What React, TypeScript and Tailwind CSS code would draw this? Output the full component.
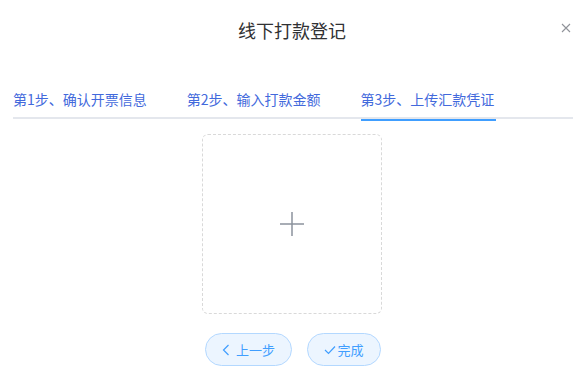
import React from "react";

const font = { fontFamily: '"Noto Sans CJK SC", "Noto Sans", sans-serif' };

export default function App() {
  const tabs = ["第1步、确认开票信息", "第2步、输入打款金额", "第3步、上传汇款凭证"];
  return (
    <div className="w-[584px] h-[379px] bg-white overflow-hidden" style={font}>
      <div className="relative h-[60px] flex items-center justify-center">
        <span className="text-[18px] leading-[24px] text-[#303133]">线下打款登记</span>
        <button className="absolute right-[11px] top-[21px] w-[14px] h-[14px] flex items-center justify-center text-[#909399]">
          <svg width="10" height="10" viewBox="0 0 10 10" fill="none" stroke="currentColor" strokeWidth="1.1">
            <path d="M1 1L9 9M9 1L1 9" />
          </svg>
        </button>
      </div>
      <div className="pl-[13px] pr-[11px] pt-[19px]">
        <div className="flex h-[40px] border-b-2 border-[#e4e7ed]">
          {tabs.map((t, i) => (
            <div
              key={t}
              className={`relative flex items-center h-[40px] text-[14px] text-[#4269dc] ${i === 0 ? "pr-[20px]" : "px-[20px]"}`}
            >
              <span className="relative h-full flex items-center">
                {t}
                {i === 2 && (
                  <span className="absolute left-0 right-[-2px] bottom-[-2px] h-[2px] bg-[#409eff]" />
                )}
              </span>
            </div>
          ))}
        </div>
        <div className="flex justify-center mt-[15px] pr-[2px]">
          <div className="w-[180px] h-[180px] border border-dashed border-[#d9d9d9] rounded-[6px] flex items-center justify-center">
            <svg width="26" height="26" viewBox="0 0 26 26" stroke="#8c939d" strokeWidth="1.5">
              <path d="M13 1V25M1 13H25" />
            </svg>
          </div>
        </div>
        <div className="flex justify-center gap-[15px] mt-[19px]">
          <button className="h-[33px] w-[87px] rounded-full border border-[#b3d8ff] bg-[#ecf5ff] text-[#409eff] text-[13px] flex items-center justify-center gap-[6px]">
            <svg width="8" height="12" viewBox="0 0 8 12" fill="none" stroke="currentColor" strokeWidth="1.2">
              <path d="M6.5 1L1.5 6L6.5 11" />
            </svg>
            <span>上一步</span>
          </button>
          <button className="h-[33px] w-[74px] rounded-full border border-[#b3d8ff] bg-[#ecf5ff] text-[#409eff] text-[13px] flex items-center justify-center gap-[1px]">
            <svg width="12" height="10" viewBox="0 0 12 10" fill="none" stroke="currentColor" strokeWidth="1.2">
              <path d="M1 5L4.5 8.5L11 1.5" />
            </svg>
            <span>完成</span>
          </button>
        </div>
      </div>
    </div>
  );
}
